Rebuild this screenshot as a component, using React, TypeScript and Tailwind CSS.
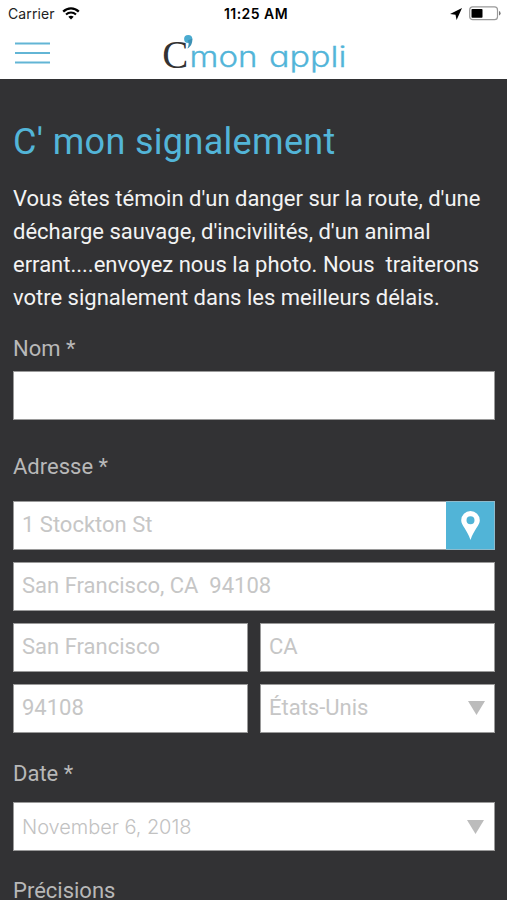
import { useState } from "react";

type FieldProps = {
  label: string;
  value: string;
  onChange?: (value: string) => void;
  className?: string;
};

function Field({ label, value, onChange, className = "" }: FieldProps) {
  return (
    <input
      aria-label={label}
      value={value}
      onChange={(e) => onChange?.(e.target.value)}
      className={`h-[49px] w-full min-w-0 border border-[#9a9a9a] bg-white px-2 pb-[2px] text-[22px] text-[#c6c6c6] outline-none ${className}`}
    />
  );
}

function SelectField({
  value,
  className = "",
}: {
  value: string;
  className?: string;
}) {
  return (
    <button
      className={`flex h-[49px] w-full items-center justify-between border border-[#9a9a9a] bg-white pl-2 ${className}`}
    >
      <span>{value}</span>
      <svg width="17" height="14" viewBox="0 0 17 14" fill="#bcbcbc">
        <path d="M0 0H17L8.5 14Z" />
      </svg>
    </button>
  );
}

function StatusBar() {
  return (
    <div className="grid h-[27px] grid-cols-3 items-center pr-[6px] pl-2 font-['Inter',sans-serif] text-[14px] text-[#222]">
      <div className="flex items-center gap-[7px]">
        <span className="tracking-[0.1px]">Carrier</span>
        <svg width="18" height="13" viewBox="0 0 18 13" fill="none" stroke="#000">
          <path d="M1.2 4.6C5.6 .3 12.4 .3 16.8 4.6" strokeWidth="2.3" />
          <path d="M4 7.5C6.9 4.8 11.1 4.8 14 7.5" strokeWidth="2.1" />
          <path d="M9 12.6L6.3 9.8Q9 7.6 11.7 9.8Z" fill="#000" stroke="none" />
        </svg>
      </div>
      <span className="pl-[3px] text-center font-semibold tracking-[0.45px] whitespace-nowrap text-black">
        11:25 AM
      </span>
      <div className="flex items-center justify-end gap-[7px]">
        <svg width="12" height="12" viewBox="0 0 12 12">
          <path d="M12 0L6.6 12L5.5 6.7L0 6Z" fill="#000" />
        </svg>
        <svg width="32" height="15" viewBox="0 0 32 15">
          <rect x=".7" y=".9" width="27.8" height="12.8" rx="3" fill="#fff" stroke="#999" strokeWidth="1.2" />
          <rect x="2.5" y="2.9" width="11" height="8.8" rx=".8" fill="#000" />
          <path d="M30 5Q31.6 5.6 31.6 7.3T30 9.6Z" fill="#777" />
        </svg>
      </div>
    </div>
  );
}

function Logo() {
  return (
    <svg
      width="190"
      height="44"
      viewBox="0 0 190 44"
      role="img"
      aria-label="C'mon appli"
      className="overflow-visible"
    >
      <text x="1.2" y="33.5" fontSize="41" textLength="26" lengthAdjust="spacingAndGlyphs" fill="#333" className="font-['Liberation_Serif',serif]">
        C
      </text>
      <circle cx="27.2" cy="5" r="4.1" fill="#4aabd0" />
      <path d="M31.3 4.4C31.7 9.5 29.4 13 26.4 14.5C28 11.5 28 9 26.7 6.6Z" fill="#3d91b5" />
      <g fill="#52b5d9" stroke="#52b5d9" strokeWidth=".3" className="font-['Inter',sans-serif] text-[28px] font-light [font-feature-settings:'cv11']">
        <text x="28.5" y="33" textLength="68" lengthAdjust="spacingAndGlyphs">
          mon
        </text>
        <text x="108" y="33" textLength="77.5" lengthAdjust="spacingAndGlyphs">
          appli
        </text>
      </g>
    </svg>
  );
}

const description = [
  "Vous êtes témoin d'un danger sur la route, d'une",
  "décharge sauvage, d'incivilités, d'un animal",
  "errant....envoyez nous la photo. Nous  traiterons",
  "votre signalement dans les meilleurs délais.",
];

export default function App() {
  const [name, setName] = useState("");
  const [street, setStreet] = useState("1 Stockton St");
  const [address, setAddress] = useState("San Francisco, CA  94108");
  const [city, setCity] = useState("San Francisco");
  const [region, setRegion] = useState("CA");
  const [zip, setZip] = useState("94108");

  return (
    <div className="flex h-[900px] w-[507px] flex-col overflow-hidden bg-[#323234] font-['Roboto',sans-serif] text-[22px]">
      <header className="h-[79px] shrink-0 bg-white">
        <StatusBar />
        <div className="flex h-[52px] items-start">
          <button aria-label="Menu" className="mt-[15px] ml-[15px] w-[35px] shrink-0">
            <svg width="35" height="22" viewBox="0 0 35 22" stroke="#62b5d5" strokeWidth="2">
              <path d="M0 1.5H35M0 11H35M0 20.5H35" />
            </svg>
          </button>
          <div className="mt-[7px] ml-[111px]">
            <Logo />
          </div>
        </div>
      </header>

      <main className="pt-[38px] pr-3 pl-[13px]">
        <h1 className="h-[50px] text-[36px] leading-[50px] tracking-[0.33px] text-[#53b5d8]">
          C' mon signalement
        </h1>
        <div className="mt-[15px] leading-[33px] whitespace-pre text-[#f3f3f3]">
          {description.map((line) => (
            <p key={line}>{line}</p>
          ))}
        </div>

        <div className="mt-[22px] h-[26px] leading-[26px] text-[#b8b8b8]">Nom *</div>
        <Field label="Nom" value={name} onChange={setName} className="mt-[9px]" />

        <div className="mt-[34px] h-[26px] leading-[26px] text-[#b8b8b8]">Adresse *</div>
        <div className="mt-[21px] grid grid-cols-2 gap-3">
          <div className="col-span-2 flex">
            <Field label="Adresse" value={street} onChange={setStreet} className="border-r-0" />
            <button
              aria-label="Me localiser"
              className="flex h-[49px] w-[49px] shrink-0 items-center justify-center border border-l-0 border-[#8dbacb] bg-[#51b4d7] pb-px"
            >
              <svg width="19" height="29" viewBox="0 0 19 29" fill="#fff">
                <path
                  fillRule="evenodd"
                  d="M9.5 0A9.3 9.3 0 0 0 .2 9.3C.2 14.5 6 18.5 9.5 29C13 18.5 18.8 14.5 18.8 9.3A9.3 9.3 0 0 0 9.5 0ZM9.5 5.3A4 4 0 1 1 9.5 13.3A4 4 0 0 1 9.5 5.3Z"
                />
              </svg>
            </button>
          </div>
          <Field label="Adresse 2" value={address} onChange={setAddress} className="col-span-2" />
          <Field label="Ville" value={city} onChange={setCity} />
          <Field label="Région" value={region} onChange={setRegion} />
          <Field label="Code postal" value={zip} onChange={setZip} />
          <SelectField value="États-Unis" className="pr-[9px] pb-[2px] text-[#c6c6c6]" />
        </div>

        <div className="mt-[28px] h-[26px] leading-[26px] text-[#b8b8b8]">Date *</div>
        <SelectField
          value="November 6, 2018"
          className="mt-[15px] pr-[10px] font-['Inter',sans-serif] text-[20px] font-light tracking-[-0.05px] text-[#c2c2c2]"
        />

        <div className="mt-[27px] h-[26px] leading-[26px] text-[#b8b8b8]">Précisions</div>
      </main>
    </div>
  );
}
